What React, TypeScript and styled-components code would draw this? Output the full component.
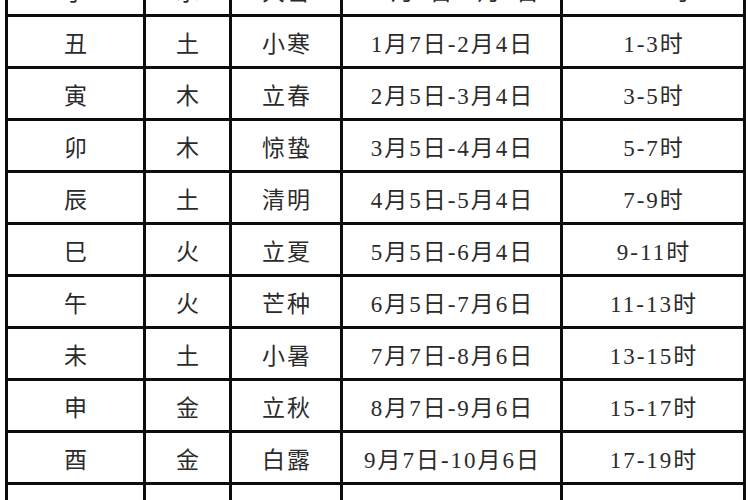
import React from "react";
import styled, { createGlobalStyle } from "styled-components";

const GlobalStyle = createGlobalStyle`
  html, body { margin: 0; padding: 0; background: #ffffff; }
  * { box-sizing: border-box; }
`;

const Page = styled.div`
  width: 750px;
  height: 500px;
  overflow: hidden;
  background: #ffffff;
  padding-left: 5px;
`;

const Grid = styled.div`
  display: grid;
  grid-template-columns: 138px 86px 111px 220px 183px;
  grid-auto-rows: 52px;
  width: 741px;
  margin-top: -38px;
  border-left: 3px solid #0d0d0d;
  border-top: 3px solid #0d0d0d;
`;

const Cell = styled.div`
  display: flex;
  align-items: center;
  justify-content: center;
  border-right: 3px solid #0d0d0d;
  border-bottom: 3px solid #0d0d0d;
  font-family: "Liberation Serif", "Noto Sans CJK SC", serif;
  font-size: 23px;
  color: #2b2b2b;
  letter-spacing: 2px;
  padding-left: 2px;
  padding-top: 1px;
  white-space: nowrap;
`;

const rows: string[][] = [
  ["子", "水", "大雪", "12月7日-1月6日", "23-1时"],
  ["丑", "土", "小寒", "1月7日-2月4日", "1-3时"],
  ["寅", "木", "立春", "2月5日-3月4日", "3-5时"],
  ["卯", "木", "惊蛰", "3月5日-4月4日", "5-7时"],
  ["辰", "土", "清明", "4月5日-5月4日", "7-9时"],
  ["巳", "火", "立夏", "5月5日-6月4日", "9-11时"],
  ["午", "火", "芒种", "6月5日-7月6日", "11-13时"],
  ["未", "土", "小暑", "7月7日-8月6日", "13-15时"],
  ["申", "金", "立秋", "8月7日-9月6日", "15-17时"],
  ["酉", "金", "白露", "9月7日-10月6日", "17-19时"],
  ["戌", "土", "寒露", "10月7日-11月6日", "19-21时"],
];

export default function App() {
  return (
    <>
      <GlobalStyle />
      <Page>
        <Grid>
          {rows.map((r, i) =>
            r.map((c, j) => <Cell key={`${i}-${j}`}>{c}</Cell>)
          )}
        </Grid>
      </Page>
    </>
  );
}
